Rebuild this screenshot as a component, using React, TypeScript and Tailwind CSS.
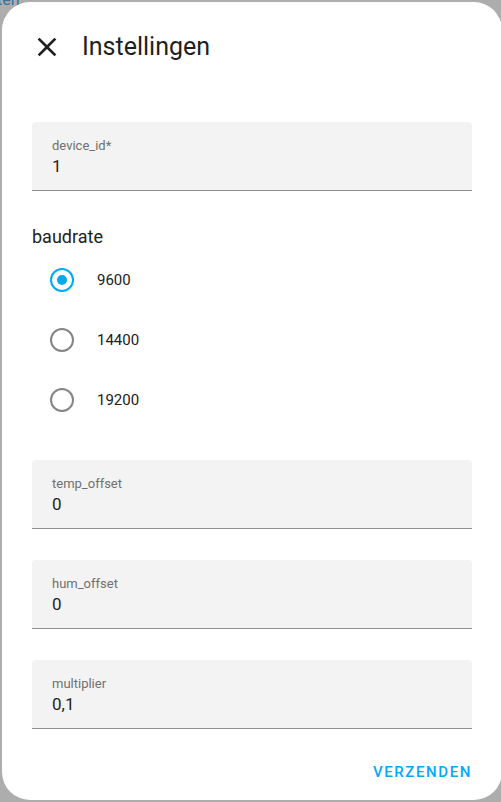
import React from "react";

const font = { fontFamily: "Roboto, 'Noto Sans', 'Liberation Sans', sans-serif" };

function Field({ label, value }: { label: string; value: string }) {
  return (
    <div className="h-[69px] w-full bg-[#f3f3f3] rounded-t-[4px] border-b border-[#8f8f8f] pl-[20px] pt-[16px] flex flex-col gap-[2px]">
      <div className="text-[13px] leading-[16px] text-[#707070]">{label}</div>
      <div className="text-[17px] leading-[20px] text-[#1f1f1f]">{value}</div>
    </div>
  );
}

function Radio({ label, checked }: { label: string; checked?: boolean }) {
  return (
    <div className="h-[60px] flex items-center pl-[18px]">
      {checked ? (
        <div className="w-[24px] h-[24px] rounded-full border-[2.5px] border-[#03a9f4] flex items-center justify-center">
          <div className="w-[10px] h-[10px] rounded-full bg-[#03a9f4]" />
        </div>
      ) : (
        <div className="w-[24px] h-[24px] rounded-full border-[2.5px] border-[#858585]" />
      )}
      <span className="ml-[23px] text-[15px] leading-[20px] text-[#212121]">{label}</span>
    </div>
  );
}

export default function App() {
  return (
    <div className="relative w-[501px] h-[802px] bg-[#adadad] overflow-hidden pl-[2px] pt-[2px]" style={font}>
      <span className="absolute left-[-3px] top-[-12px] text-[16px] text-[#3d6f9c]">ten</span>
      <div className="relative w-[500px] h-[798px] bg-white rounded-[28px] flex flex-col">
        <div className="h-[90px] flex items-center pl-[29px]">
          <svg width="32" height="32" viewBox="0 0 24 24" fill="#1f1f1f">
            <path d="M19 6.41L17.59 5 12 10.59 6.41 5 5 6.41 10.59 12 5 17.59 6.41 19 12 13.41 17.59 19 19 17.59 13.41 12z" />
          </svg>
          <span className="ml-[19px] text-[25px] leading-[30px] text-[#1f1f1f]">Instellingen</span>
        </div>
        <div className="px-[30px] pt-[30px] flex flex-col">
          <Field label="device_id*" value="1" />
          <div className="mt-[34px] text-[18px] leading-[24px] text-[#212121]">baudrate</div>
          <div className="mt-[1px] flex flex-col">
            <Radio label="9600" checked />
            <Radio label="14400" />
            <Radio label="19200" />
          </div>
          <div className="mt-[30px] flex flex-col gap-[31px]">
            <Field label="temp_offset" value="0" />
            <Field label="hum_offset" value="0" />
            <Field label="multiplier" value="0,1" />
          </div>
          <div className="mt-[33px] flex justify-end">
            <span className="text-[15px] leading-[20px] font-medium tracking-[1.6px] text-[#03a9f4]">VERZENDEN</span>
          </div>
        </div>
      </div>
    </div>
  );
}
